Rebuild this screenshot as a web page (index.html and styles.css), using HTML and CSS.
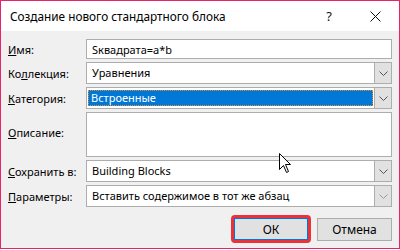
FILE: index.html
```html
<!DOCTYPE html>
<html lang="ru">
<head>
    <meta charset="UTF-8">
    <title>Создание нового стандартного блока</title>
    <link rel="stylesheet" href="styles.css">
</head>
<body>
    <div class="dialog">
        <div class="titlebar">
            <span class="title">Создание нового стандартного блока</span>
            <span class="help">?</span>
            <svg class="close" width="11" height="11" viewBox="0 0 11 11">
                <path d="M0.5 0.5 L10.5 10.5 M10.5 0.5 L0.5 10.5" stroke="#111" stroke-width="1" fill="none"/>
            </svg>
        </div>
        <div class="form">
            <label><u>И</u>мя:</label>
            <div class="field input">Sквадрата=a*b</div>

            <label>Ко<u>л</u>лекция:</label>
            <div class="field select">
                <span class="value">Уравнения</span>
                <span class="drop"><svg width="9" height="5" viewBox="0 0 9 5"><path d="M0.5 0.5 L4.5 4.5 L8.5 0.5" stroke="#555" fill="none"/></svg></span>
            </div>

            <label><u>К</u>атегория:</label>
            <div class="field select">
                <span class="value selected">Встроенные</span>
                <span class="drop"><svg width="9" height="5" viewBox="0 0 9 5"><path d="M0.5 0.5 L4.5 4.5 L8.5 0.5" stroke="#555" fill="none"/></svg></span>
            </div>

            <label class="top"><u>О</u>писание:</label>
            <div class="field area"></div>

            <label><u>С</u>охранить в:</label>
            <div class="field select">
                <span class="value">Building Blocks</span>
                <span class="drop"><svg width="9" height="5" viewBox="0 0 9 5"><path d="M0.5 0.5 L4.5 4.5 L8.5 0.5" stroke="#555" fill="none"/></svg></span>
            </div>

            <label><u>П</u>араметры:</label>
            <div class="field select">
                <span class="value">Вставить содержимое в тот же абзац</span>
                <span class="drop"><svg width="9" height="5" viewBox="0 0 9 5"><path d="M0.5 0.5 L4.5 4.5 L8.5 0.5" stroke="#999" fill="none"/></svg></span>
            </div>
        </div>
        <div class="buttons">
            <div class="ok-wrap"><button class="btn ok">ОК</button></div>
            <button class="btn">Отмена</button>
        </div>
        <svg class="cursor" width="13" height="21" viewBox="0 0 13 21">
            <path d="M0.5 0.5 L0.5 16.5 L4.5 12.5 L7.5 19.5 L9.5 18.5 L6.5 11.5 L11.5 11.5 Z" fill="#fff" stroke="#000" stroke-width="1" stroke-linejoin="miter"/>
        </svg>
    </div>
</body>
</html>
```

FILE: styles.css
```css
body {
    margin: 0;
    font-family: "Noto Sans", "Open Sans", sans-serif;
    font-size: 11px;
    color: #000;
}
.dialog {
    position: relative;
    width: 400px;
    height: 249px;
    box-sizing: border-box;
    border: 1px solid #e8236a;
    background: #f0f0f0;
}
.titlebar {
    height: 30px;
    background: #fff;
    display: flex;
    align-items: center;
    padding-left: 9px;
}
.title {
    flex: 1;
    font-size: 11.8px;
}
.help {
    font-size: 13px;
    margin-right: 38px;
    color: #111;
}
.close {
    margin-right: 18px;
}
.form {
    display: grid;
    grid-template-columns: 78px 1fr;
    grid-template-rows: 20px 22px 22px 45px 22px 22px;
    row-gap: 3px;
    padding: 8px 7px 0 7px;
}
label {
    display: flex;
    align-items: center;
    color: #000;
}
label.top {
    padding-bottom: 4px;
}
.field {
    background: #fff;
    border: 1px solid #adadad;
    box-sizing: border-box;
    display: flex;
    align-items: center;
}
.input {
    padding-left: 5px;
}
.select .value {
    flex: 1;
    padding-left: 5px;
    line-height: 14px;
}
.select .value.selected {
    margin: 2px 1px 2px 1px;
    padding: 0 0 0 3px;
    align-self: stretch;
    display: flex;
    align-items: center;
    background: #0078d7;
    color: #fff;
    outline: 1px dotted #f08a24;
    outline-offset: -1px;
}
.drop {
    width: 16px;
    align-self: stretch;
    background: #e1e1e1;
    border-left: 1px solid #adadad;
    display: flex;
    align-items: center;
    justify-content: center;
}
.buttons {
    display: flex;
    justify-content: flex-end;
    align-items: center;
    gap: 6px;
    padding: 8px 7px 0 0;
}
.ok-wrap {
    border: 3px solid #e8323c;
    border-radius: 4px;
}
.btn {
    width: 75px;
    height: 23px;
    font-family: "Noto Sans", "Open Sans", sans-serif;
    font-size: 12px;
    background: #e1e1e1;
    border: 1px solid #adadad;
    padding: 0;
    color: #000;
}
.btn.ok {
    display: block;
    width: 74px;
    height: 22px;
    border-color: #0078d7;
}
.cursor {
    position: absolute;
    left: 278px;
    top: 152px;
}
```
